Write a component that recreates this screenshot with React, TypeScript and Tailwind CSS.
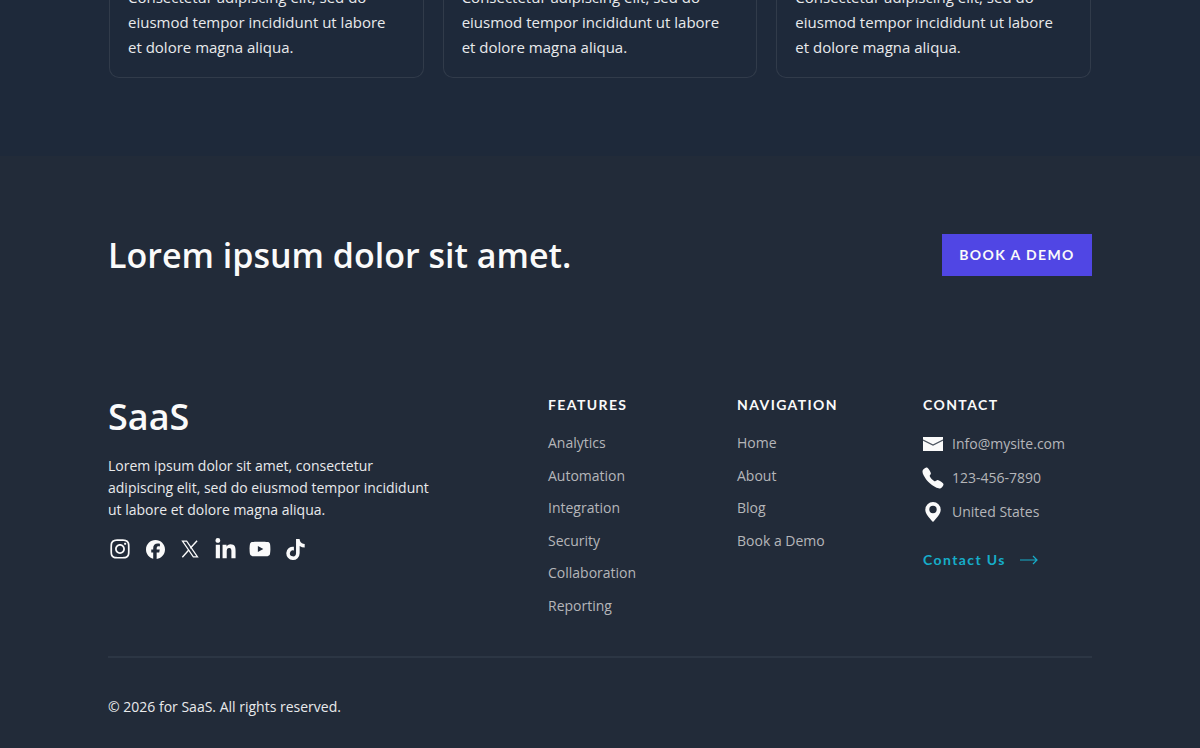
import React from "react";
import {
  FaFacebook,
  FaInstagram,
  FaLinkedinIn,
  FaTiktok,
  FaYoutube,
} from "react-icons/fa6";
import { IoCall } from "react-icons/io5";

interface LinkColumnProps {
  title: string;
  links: string[];
}

const cards = ["first", "second", "third"];

const features = [
  "Analytics",
  "Automation",
  "Integration",
  "Security",
  "Collaboration",
  "Reporting",
];

const navigation = ["Home", "About", "Blog", "Book a Demo"];

const XLogo = () => (
  <svg viewBox="0 0 24 24" className="size-5" fill="none" stroke="currentColor">
    <path d="M3 2.500h5L21 21.500h-5z" strokeWidth="1.500" />
    <path d="M20.500 2l-8.200 9M10.800 13L2.800 22" strokeWidth="1.700" />
  </svg>
);

const MailIcon = () => (
  <svg viewBox="0 0 20 14" className="h-[14px] w-5">
    <path d="M0 0h20v14H0z" fill="#fafafa" />
    <path d="M0 3l10 5 10-5" fill="none" stroke="#4b535f" strokeWidth="1.2" />
  </svg>
);

const PinIcon = () => (
  <svg viewBox="0 0 16 20" className="h-5 w-4">
    <path
      fillRule="evenodd"
      d="M8 0a7.700 7.700 0 0 1 7.700 7.700C15.700 11.500 12 15.500 8 20 4 15.500.3 11.500.3 7.700A7.700 7.700 0 0 1 8 0zm0 3.800a3.700 3.700 0 1 0 0 7.400 3.700 3.700 0 0 0 0-7.400z"
      fill="currentColor"
    />
  </svg>
);

const ArrowIcon = () => (
  <svg
    viewBox="0 0 18 10"
    className="h-[10px] w-[18px]"
    fill="none"
    stroke="currentColor"
    strokeWidth="1.2"
  >
    <path d="M0 5h17M13 1l4 4-4 4" />
  </svg>
);

const socials = [
  { name: "Instagram", icon: <FaInstagram className="size-[22px]" /> },
  { name: "Facebook", icon: <FaFacebook className="size-[19px]" /> },
  { name: "X", icon: <XLogo /> },
  { name: "LinkedIn", icon: <FaLinkedinIn className="size-[23px]" /> },
  { name: "YouTube", icon: <FaYoutube className="size-[22px]" /> },
  { name: "TikTok", icon: <FaTiktok className="size-[21px]" /> },
];

const contacts = [
  { text: "Info@mysite.com", href: "mailto:Info@mysite.com", icon: <MailIcon /> },
  { text: "123-456-7890", href: "tel:123-456-7890", icon: <IoCall className="size-6 shrink-0" /> },
  { text: "United States", href: "#location", icon: <PinIcon /> },
];

function LinkColumn({ title, links }: LinkColumnProps) {
  return (
    <nav aria-label={title}>
      <h3 className="font-['Lato',sans-serif] text-sm leading-5 font-bold tracking-widest">
        {title}
      </h3>
      <ul className="mt-[12px] grid h-[195px] grid-rows-6 items-center text-sm text-[#b5b6b9]">
        {links.map((link) => (
          <li key={link}>
            <a href="#" className="hover:text-white">
              {link}
            </a>
          </li>
        ))}
      </ul>
    </nav>
  );
}

export default function App() {
  return (
    <div className="min-h-screen bg-[#222b39] font-['Open_Sans',sans-serif] text-[#fafafa]">
      {/* Cards */}
      <section className="overflow-hidden bg-[#1e293a] pb-[78px]">
        <div className="mx-auto -mt-[15px] grid w-[82%] grid-cols-3 gap-[19px] px-px">
          {cards.map((card) => (
            <article
              key={card}
              className="rounded-b-[10px] border border-t-0 border-[#313b4a] px-[18px] pb-[17px] text-[15px] leading-[25px] text-[#e9eaec]"
            >
              <p>
                Consectetur adipiscing elit, sed do
                <br />
                eiusmod tempor incididunt ut labore
                <br />
                et dolore magna aliqua.
              </p>
            </article>
          ))}
        </div>
      </section>

      {/* Call to action */}
      <section className="mx-auto flex w-[82%] items-center justify-between pt-[78px]">
        <h2 className="text-[34px] leading-[42px] font-semibold">
          Lorem ipsum dolor sit amet.
        </h2>
        <button
          type="button"
          className="h-[42px] w-[150px] bg-[#5046e4] font-['Lato',sans-serif] text-sm font-bold tracking-widest"
        >
          BOOK A DEMO
        </button>
      </section>

      <footer className="mx-auto w-[82%] pt-[119px]">
        <div className="grid grid-cols-[440fr_189fr_186fr_169fr]">
          <div>
            <h2 className="text-4xl leading-[44px] font-semibold">SaaS</h2>
            <p className="mt-[16px] text-sm leading-[22px] text-[#e9eaec]">
              Lorem ipsum dolor sit amet, consectetur
              <br />
              adipiscing elit, sed do eiusmod tempor incididunt
              <br />
              ut labore et dolore magna aliqua.
            </p>
            <div className="mt-[16px] flex gap-[11px]">
              {socials.map(({ name, icon }) => (
                <a
                  key={name}
                  href="#"
                  aria-label={name}
                  className="flex size-6 items-center justify-center"
                >
                  {icon}
                </a>
              ))}
            </div>
          </div>

          <LinkColumn title="FEATURES" links={features} />
          <LinkColumn title="NAVIGATION" links={navigation} />

          <address className="not-italic">
            <h3 className="font-['Lato',sans-serif] text-sm leading-5 font-bold tracking-widest">
              CONTACT
            </h3>
            <ul className="mt-[12px] text-sm text-[#b5b6b9]">
              {contacts.map(({ text, href, icon }) => (
                <li key={text}>
                  <a href={href} className="flex h-[34px] items-center gap-[9px]">
                    <span className="flex w-5 justify-center text-[#fafafa]">{icon}</span>
                    {text}
                  </a>
                </li>
              ))}
            </ul>
            <a
              href="#contact"
              className="mt-[21px] flex items-center gap-[14px] font-['Lato',sans-serif] text-sm leading-5 font-bold tracking-widest text-[#16adc9]"
            >
              Contact Us
              <ArrowIcon />
            </a>
          </address>
        </div>

        <p className="mt-[34px] border-t-2 border-[#2c3644] pt-[39px] pb-[30px] text-sm leading-5 text-[#e9eaec]">
          © 2026 for SaaS. All rights reserved.
        </p>
      </footer>
    </div>
  );
}
